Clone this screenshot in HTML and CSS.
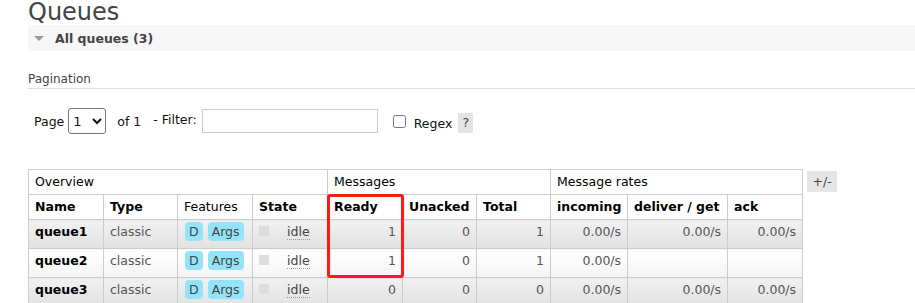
FILE: index.html
```html
<!DOCTYPE html>
<html lang="en">
<head>
    <meta charset="UTF-8">
    <title>Queues</title>
    <link rel="stylesheet" href="styles.css">
</head>
<body>
    <h1 class="page-title">Queues</h1>

    <div class="section">
        <div class="section-head"><span class="arrow"></span>All queues (3)</div>

        <h3 class="sub-head">Pagination</h3>
        <div class="pager">
            <span class="pager-label">Page</span>
            <select class="page-select">
                <option>1</option>
            </select>
            <span class="pager-of">of 1</span>
            <span class="pager-filter">- Filter:</span>
            <input type="text" class="filter-input">
            <input type="checkbox" class="regex-check" id="regex">
            <label for="regex" class="regex-label">Regex</label>
            <span class="help">?</span>
        </div>

        <div class="table-row">
            <div class="grid-box">
                <table class="list">
                    <colgroup>
                        <col class="w75"><col class="w74"><col class="w75"><col class="w75">
                        <col class="w75"><col class="w74"><col class="w74">
                        <col class="w77"><col class="w100"><col class="w75">
                    </colgroup>
                    <thead>
                        <tr class="group-row">
                            <th colspan="4">Overview</th>
                            <th colspan="3">Messages</th>
                            <th colspan="3">Message rates</th>
                        </tr>
                        <tr class="col-row">
                            <th>Name</th>
                            <th>Type</th>
                            <th class="plain">Features</th>
                            <th>State</th>
                            <th>Ready</th>
                            <th>Unacked</th>
                            <th>Total</th>
                            <th>incoming</th>
                            <th>deliver / get</th>
                            <th>ack</th>
                        </tr>
                    </thead>
                    <tbody>
                        <tr class="alt1">
                            <td class="name">queue1</td>
                            <td>classic</td>
                            <td><span class="badge">D</span> <span class="badge">Args</span></td>
                            <td><span class="state-box"></span><abbr class="state">idle</abbr></td>
                            <td class="num">1</td>
                            <td class="num">0</td>
                            <td class="num">1</td>
                            <td class="num">0.00/s</td>
                            <td class="num">0.00/s</td>
                            <td class="num">0.00/s</td>
                        </tr>
                        <tr class="alt2">
                            <td class="name">queue2</td>
                            <td>classic</td>
                            <td><span class="badge">D</span> <span class="badge">Args</span></td>
                            <td><span class="state-box"></span><abbr class="state">idle</abbr></td>
                            <td class="num">1</td>
                            <td class="num">0</td>
                            <td class="num">1</td>
                            <td class="num">0.00/s</td>
                            <td class="num"></td>
                            <td class="num"></td>
                        </tr>
                        <tr class="alt1">
                            <td class="name">queue3</td>
                            <td>classic</td>
                            <td><span class="badge">D</span> <span class="badge">Args</span></td>
                            <td><span class="state-box"></span><abbr class="state">idle</abbr></td>
                            <td class="num">0</td>
                            <td class="num">0</td>
                            <td class="num">0</td>
                            <td class="num">0.00/s</td>
                            <td class="num">0.00/s</td>
                            <td class="num">0.00/s</td>
                        </tr>
                    </tbody>
                </table>
                <!-- highlight around the Ready column -->
                <div class="mark"></div>
            </div>
            <span class="toggle-cols">+/-</span>
        </div>
    </div>
</body>
</html>
```

FILE: styles.css
```css
body {
    margin: 0;
    padding: 0 0 0 28px;
    font-family: 'DejaVu Sans', Verdana, sans-serif;
    font-size: 12.5px;
    color: #222;
    background: #fff;
    overflow: hidden;
}
.page-title {
    margin: 0;
    font-size: 24px;
    line-height: 24px;
    font-weight: normal;
    color: #444;
}
.section-head {
    display: flex;
    align-items: center;
    height: 26px;
    margin-top: 1px;
    padding-left: 6px;
    background: #f6f6f6;
    font-weight: bold;
    color: #444;
}
.arrow {
    width: 0;
    height: 0;
    border-left: 5px solid transparent;
    border-right: 5px solid transparent;
    border-top: 5px solid #999;
    margin-right: 11px;
}
.sub-head {
    margin: 21px 0 0;
    padding-bottom: 1px;
    font-size: 12px;
    line-height: 15px;
    font-weight: normal;
    color: #444;
    border-bottom: 1px solid #ddd;
}
.pager {
    display: flex;
    align-items: center;
    height: 26px;
    margin-top: 19px;
    padding-left: 6px;
    color: #111;
}
.page-select {
    width: 38px;
    height: 26px;
    margin-left: 4px;
    font-family: 'DejaVu Sans', Verdana, sans-serif;
    font-size: 13px;
    border: 1px solid #767676;
    border-radius: 3px;
    background: #fff;
    color: #111;
}
.pager-of {
    margin-left: 11px;
}
.pager-filter {
    margin-left: 12px;
    margin-bottom: 3px;
}
.filter-input {
    width: 176px;
    height: 24px;
    margin: 0 0 0 5px;
    box-sizing: border-box;
    border: 1px solid #ccc;
}
.regex-check {
    width: 13px;
    height: 13px;
    margin: 0 0 0 15px;
}
.regex-label {
    margin: 5px 0 0 8px;
}
.help {
    display: inline-block;
    width: 15px;
    height: 20px;
    line-height: 20px;
    margin: 4px 0 0 6px;
    text-align: center;
    background: #e4e4e4;
    color: #444;
}
.table-row {
    display: flex;
    align-items: flex-start;
    gap: 4px;
    margin-top: 35px;
}
.grid-box {
    position: relative;
}
table.list {
    border-collapse: collapse;
    table-layout: fixed;
    width: 775px;
}
.w74 { width: 74px; }
.w75 { width: 75px; }
.w77 { width: 77px; }
.w100 { width: 100px; }
table.list th,
table.list td {
    border: 1px solid #ccc;
    padding: 0 6px;
    white-space: nowrap;
    overflow: hidden;
}
table.list th {
    height: 24px;
    line-height: 16px;
    text-align: left;
    vertical-align: middle;
    background: #fff;
    color: #000;
}
.group-row th {
    font-weight: normal;
    color: #222;
}
.col-row th.plain {
    font-weight: normal;
}
table.list td {
    height: 24px;
    padding-top: 4px;
    line-height: 16px;
    vertical-align: top;
    color: #555;
}
table.list td.name {
    font-weight: bold;
    color: #000;
}
table.list td.num {
    text-align: right;
}
tr.alt1 td {
    background: linear-gradient(#f1f1f1, #e1e1e1);
}
tr.alt2 td {
    background: linear-gradient(#fff, #f4f4f4);
}
.badge {
    display: inline-block;
    height: 19px;
    line-height: 19px;
    margin: -2px 0 -2px 1px;
    padding: 0 4px;
    border-radius: 4px;
    background: #94e4f9;
    color: #444;
}
.state-box {
    display: inline-block;
    width: 10px;
    height: 10px;
    background: #ddd;
    margin-right: 18px;
}
abbr.state {
    text-decoration: none;
    border-bottom: 1px dotted #999;
    color: #444;
}
.mark {
    position: absolute;
    left: 299px;
    top: 25px;
    width: 77px;
    height: 84px;
    box-sizing: border-box;
    border: 3px solid #ff1a1a;
    border-radius: 3px;
}
.toggle-cols {
    display: inline-block;
    width: 30px;
    height: 21px;
    line-height: 21px;
    margin-top: 2px;
    text-align: center;
    background: #e6e6e6;
    color: #444;
}
```
